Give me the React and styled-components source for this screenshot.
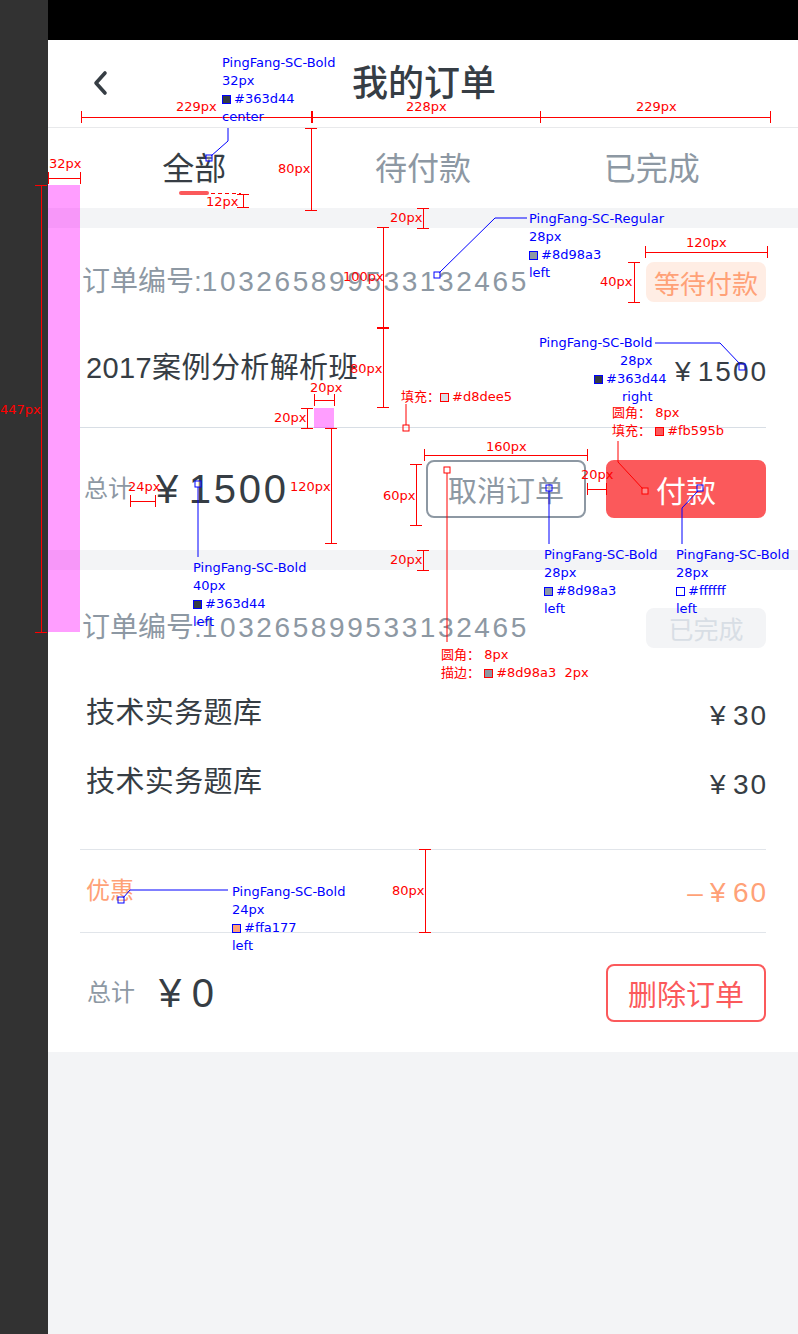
import React from 'react';
import styled, { createGlobalStyle } from 'styled-components';

const TEXT = '#363d44';
const GRAY = '#8d98a3';
const RED = '#fb595b';
const ORANGE = '#ffa177';
const MARK_RED = '#ff0000';
const MARK_BLUE = '#0000ff';

const GlobalStyle = createGlobalStyle`
  * { box-sizing: border-box; }
  body {
    margin: 0;
    background: #f3f4f6;
    font-family: "Liberation Sans", "Noto Sans CJK SC", sans-serif;
  }
`;

const orders = [
  {
    id: 1,
    no: '103265899533132465',
    status: { text: '等待付款', bg: '#ffede4', color: ORANGE },
    items: [{ name: '2017案例分析解析班', price: '1500' }],
    headPad: 8,
    rowHeight: 80,
    listPad: '0 0 19px',
    total: '1500',
    discount: null,
    actions: ['cancel', 'pay'],
  },
  {
    id: 2,
    no: '103265899533132465',
    status: { text: '已完成', bg: '#f3f4f6', color: '#d8dee5' },
    items: [
      { name: '技术实务题库', price: '30' },
      { name: '技术实务题库', price: '30' },
    ],
    headPad: 16,
    rowHeight: 69,
    listPad: '8px 0 33px',
    total: '0',
    discount: '60',
    actions: ['delete'],
  },
];

// dimension marks of the spec sheet (page coordinates)
const hDims = [
  { x1: 81, x2: 770, y: 117, ticks: [81, 311, 540, 770] },
  { x1: 48, x2: 80, y: 178 },
  { x1: 645, x2: 767, y: 252 },
  { x1: 314, x2: 334, y: 400 },
  { x1: 130, x2: 155, y: 501 },
  { x1: 424, x2: 587, y: 455 },
  { x1: 587, x2: 606, y: 489 },
];

const vDims = [
  { x: 311, y1: 128, y2: 210 },
  { x: 243, y1: 194, y2: 207 },
  { x: 41, y1: 185, y2: 632 },
  { x: 423, y1: 208, y2: 228 },
  { x: 383, y1: 227, y2: 407, ticks: [227, 327, 407] },
  { x: 634, y1: 262, y2: 302 },
  { x: 307, y1: 408, y2: 428 },
  { x: 331, y1: 428, y2: 543 },
  { x: 416, y1: 464, y2: 525 },
  { x: 423, y1: 550, y2: 570 },
  { x: 425, y1: 849, y2: 932 },
];

const leaders = [
  { c: MARK_RED, pts: [[406, 404], [406, 425]], sq: [406, 428] },
  { c: MARK_RED, pts: [[618, 441], [618, 462], [643, 489]], sq: [645, 491] },
  { c: MARK_RED, pts: [[447, 473], [447, 642]], sq: [447, 470] },
  { c: MARK_BLUE, pts: [[228, 128], [228, 141], [211, 156]], sq: [209, 158] },
  { c: MARK_BLUE, pts: [[527, 218], [495, 218], [439, 273]], sq: [437, 275] },
  { c: MARK_BLUE, pts: [[655, 343], [720, 343], [740, 364]], sq: [742, 367] },
  { c: MARK_BLUE, pts: [[198, 487], [198, 557]], sq: [198, 484] },
  { c: MARK_BLUE, pts: [[549, 491], [549, 544]], sq: [549, 488] },
  { c: MARK_BLUE, pts: [[682, 544], [682, 508], [698, 491]], sq: [700, 488] },
  { c: MARK_BLUE, pts: [[228, 890], [130, 890], [123, 898]], sq: [121, 900] },
];

const sizeLabels = [
  { x: 176, y: 99, t: '229px' },
  { x: 406, y: 99, t: '228px' },
  { x: 636, y: 99, t: '229px' },
  { x: 278, y: 161, t: '80px' },
  { x: 206, y: 194, t: '12px' },
  { x: 49, y: 156, t: '32px' },
  { x: 0, y: 402, t: '447px' },
  { x: 390, y: 210, t: '20px' },
  { x: 343, y: 269, t: '100px' },
  { x: 350, y: 361, t: '80px' },
  { x: 686, y: 235, t: '120px' },
  { x: 600, y: 274, t: '40px' },
  { x: 310, y: 380, t: '20px' },
  { x: 274, y: 410, t: '20px' },
  { x: 290, y: 479, t: '120px' },
  { x: 128, y: 479, t: '24px' },
  { x: 486, y: 439, t: '160px' },
  { x: 383, y: 488, t: '60px' },
  { x: 581, y: 467, t: '20px' },
  { x: 390, y: 552, t: '20px' },
  { x: 392, y: 883, t: '80px' },
];

const fontNotes = [
  { x: 222, y: 54, lines: ['PingFang-SC-Bold', '32px', ['#363d44', '#363d44'], 'center'] },
  { x: 529, y: 210, lines: ['PingFang-SC-Regular', '28px', ['#8d98a3', '#8d98a3'], 'left'] },
  { x: 193, y: 559, lines: ['PingFang-SC-Bold', '40px', ['#363d44', '#363d44'], 'left'] },
  { x: 544, y: 546, lines: ['PingFang-SC-Bold', '28px', ['#8d98a3', '#8d98a3'], 'left'] },
  { x: 676, y: 546, lines: ['PingFang-SC-Bold', '28px', ['#ffffff', '#ffffff'], 'left'] },
  { x: 232, y: 883, lines: ['PingFang-SC-Bold', '24px', ['#ffa177', '#ffa177'], 'left'] },
];

const Page = styled.div`
  position: relative;
  display: flex;
  width: 798px;
  min-height: 1334px;
  overflow: hidden;
`;

const Sidebar = styled.div`
  width: 48px;
  flex-shrink: 0;
  background: #323232;
`;

const Screen = styled.div`
  flex: 1;
  display: flex;
  flex-direction: column;
  background: #f3f4f6;
`;

const StatusBar = styled.div`
  height: 40px;
  background: #000;
`;

const NavBar = styled.div`
  height: 88px;
  display: grid;
  grid-template-columns: 1fr auto 1fr;
  align-items: center;
  background: #fff;
  border-bottom: 1px solid #e8e9eb;
`;

const BackButton = styled.div`
  justify-self: start;
  display: flex;
  margin-left: 44px;
  margin-top: -2px;
`;

const Title = styled.div`
  font-size: 36px;
  line-height: 44px;
  font-weight: 500;
  color: ${TEXT};
  margin-left: 2px;
`;

const Tabs = styled.div`
  height: 80px;
  display: grid;
  grid-template-columns: repeat(3, 1fr);
  padding: 0 32px;
  background: #fff;
`;

const Tab = styled.div`
  display: flex;
  flex-direction: column;
  align-items: center;
  padding-top: 21px;
  color: ${({ $active }) => ($active ? TEXT : GRAY)};
`;

const TabText = styled.span`
  font-size: 32px;
  line-height: 40px;
`;

const TabBar = styled.span`
  width: 30px;
  height: 4px;
  margin-top: 2px;
  border-radius: 2px;
  background: ${({ $active }) => ($active ? RED : 'transparent')};
`;

const Card = styled.div`
  margin-top: 20px;
  padding: 0 32px;
  background: #fff;
`;

const OrderHead = styled.div`
  height: 100px;
  display: flex;
  align-items: center;
  justify-content: space-between;
  padding-top: ${({ $pt }) => $pt}px;
`;

const OrderNo = styled.span`
  font-size: 28px;
  line-height: 40px;
  color: ${GRAY};
  white-space: nowrap;
  margin-left: 2px;
`;

const Digits = styled.span`
  letter-spacing: 2.6px;
`;

const Badge = styled.span`
  width: 120px;
  height: 40px;
  display: flex;
  align-items: center;
  justify-content: center;
  border-radius: 8px;
  font-size: ${({ $size }) => $size}px;
  background: ${({ $bg }) => $bg};
  color: ${({ $color }) => $color};
`;

const ItemList = styled.div`
  padding: ${({ $pad }) => $pad};
`;

const Row = styled.div`
  height: ${({ $h }) => $h}px;
  display: flex;
  align-items: center;
  justify-content: space-between;
`;

const ItemName = styled.span`
  font-size: 29px;
  line-height: 40px;
  letter-spacing: 0.4px;
  color: ${TEXT};
  margin-left: 6px;
`;

const Price = styled.span`
  font-size: ${({ $size }) => $size}px;
  line-height: 1.2;
  letter-spacing: 0.07em;
  margin-right: -0.07em;
  margin-top: ${({ $mt }) => $mt || 0}px;
  color: ${({ $color }) => $color || TEXT};
  white-space: nowrap;
`;

const Yen = styled.span`
  letter-spacing: 0.26em;
`;

const Divider = styled.div`
  height: 1px;
  background: ${({ $color }) => $color};
`;

const Footer = styled.div`
  height: ${({ $h }) => $h}px;
  display: flex;
  align-items: center;
  justify-content: space-between;
`;

const Total = styled.div`
  display: flex;
  align-items: center;
  gap: 24px;
`;

const SmallLabel = styled.span`
  font-size: 24px;
  line-height: 32px;
  color: ${({ $color }) => $color};
  margin-left: ${({ $ml }) => $ml || 4}px;
`;

const Actions = styled.div`
  display: flex;
  gap: 20px;
`;

const Button = styled.button`
  width: 160px;
  height: 58px;
  border-radius: 8px;
  font-family: "Liberation Sans", "Noto Sans CJK SC", sans-serif;
  padding: 0;
  border: 2px solid ${({ $variant }) => ($variant === 'cancel' ? GRAY : RED)};
  background: ${({ $variant }) => ($variant === 'pay' ? RED : '#fff')};
  color: ${({ $variant }) => ($variant === 'cancel' ? GRAY : $variant === 'pay' ? '#fff' : RED)};
  font-size: ${({ $variant }) => ($variant === 'pay' ? 30 : 29)}px;
`;

/* ---------- spec-sheet overlay ---------- */

const Overlay = styled.div`
  position: absolute;
  inset: 0;
  pointer-events: none;
`;

const Mask = styled.div`
  position: absolute;
  left: ${({ $x }) => $x}px;
  top: ${({ $y }) => $y}px;
  width: ${({ $w }) => $w}px;
  height: ${({ $h }) => $h}px;
  background: rgba(255, 0, 255, 0.38);
`;

const MarkSvg = styled.svg`
  position: absolute;
  left: 0;
  top: 0;
`;

const Label = styled.span`
  position: absolute;
  left: ${({ $x }) => $x}px;
  top: ${({ $y }) => $y}px;
  font-family: "DejaVu Sans", "Noto Sans CJK SC", sans-serif;
  font-size: 13px;
  line-height: 16px;
  color: ${MARK_RED};
  white-space: nowrap;
`;

const Note = styled.div`
  position: absolute;
  left: ${({ $x }) => $x}px;
  top: ${({ $y }) => $y}px;
  font-family: "DejaVu Sans", sans-serif;
  font-size: 13px;
  line-height: 18px;
  color: ${MARK_BLUE};
  white-space: nowrap;
`;

const Swatch = styled.span`
  display: inline-block;
  width: 9px;
  height: 9px;
  margin-right: 3px;
  vertical-align: -1px;
  border: 1px solid ${({ $border }) => $border};
  background: ${({ $fill }) => $fill};
`;

const BackIcon = () => (
  <svg width="18" height="26" viewBox="0 0 18 26">
    <polyline points="13,3 4,13 13,23" fill="none" stroke={TEXT} strokeWidth="3.6" strokeLinecap="round" strokeLinejoin="round" />
  </svg>
);

const Marks = () => {
  const t = 6;
  const els = [];
  hDims.forEach((d, i) => {
    const y = d.y + 0.5;
    els.push(<line key={`h${i}`} x1={d.x1} y1={y} x2={d.x2} y2={y} />);
    (d.ticks || [d.x1, d.x2]).forEach((x, j) => (
      els.push(<line key={`h${i}-${j}`} x1={x + 0.5} y1={d.y - t} x2={x + 0.5} y2={d.y + t} />)
    ));
  });
  vDims.forEach((d, i) => {
    const x = d.x + 0.5;
    els.push(<line key={`v${i}`} x1={x} y1={d.y1} x2={x} y2={d.y2} />);
    (d.ticks || [d.y1, d.y2]).forEach((y, j) => (
      els.push(<line key={`v${i}-${j}`} x1={d.x - t} y1={y + 0.5} x2={d.x + t} y2={y + 0.5} />)
    ));
  });
  return (
    <MarkSvg width="798" height="1334" viewBox="0 0 798 1334">
      <g stroke={MARK_RED} strokeWidth="1" shapeRendering="crispEdges">
        {els}
        <line x1="311.5" y1="111" x2="311.5" y2="123" strokeWidth="2" />
        <line x1="377" y1="327.5" x2="389" y2="327.5" strokeWidth="2" />
        <line x1="211" y1="193.5" x2="241" y2="193.5" strokeDasharray="4 3" />
      </g>
      {leaders.map((l, i) => (
        <g key={i} stroke={l.c} fill="none" strokeWidth="1">
          <polyline points={l.pts.map((p) => p.join(',')).join(' ')} />
          <rect x={l.sq[0] - 3} y={l.sq[1] - 3} width="6" height="6" fill="#fff" fillOpacity="0.3" />
        </g>
      ))}
    </MarkSvg>
  );
};

const Annotations = () => (
  <Overlay>
    <Mask $x={48} $y={185} $w={32} $h={447} />
    <Mask $x={314} $y={408} $w={20} $h={20} />
    <Marks />
    {sizeLabels.map((l, i) => (
      <Label key={i} $x={l.x} $y={l.y}>{l.t}</Label>
    ))}
    <Label $x={401} $y={389}>填充：<Swatch $border={MARK_RED} $fill="#d8dee5" />#d8dee5</Label>
    <Label $x={612} $y={405}>圆角： 8px</Label>
    <Label $x={612} $y={423}>填充： <Swatch $border={MARK_RED} $fill={RED} />#fb595b</Label>
    <Label $x={441} $y={647}>圆角： 8px</Label>
    <Label $x={441} $y={665}>描边： <Swatch $border={MARK_RED} $fill={GRAY} />#8d98a3&nbsp; 2px</Label>
    {fontNotes.map((n, i) => (
      <Note key={i} $x={n.x} $y={n.y}>
        {n.lines.map((line, j) => (
          <div key={j}>
            {Array.isArray(line) ? (
              <>
                <Swatch $border={MARK_BLUE} $fill={line[0]} />
                {line[1]}
              </>
            ) : line}
          </div>
        ))}
      </Note>
    ))}
    <Note $x={539} $y={334}>PingFang-SC-Bold</Note>
    <Note $x={620} $y={352}>28px</Note>
    <Note $x={594} $y={370}><Swatch $border={MARK_BLUE} $fill={TEXT} />#363d44</Note>
    <Note $x={622} $y={388}>right</Note>
  </Overlay>
);

const PriceText = ({ value, size, color, sign, mt }) => (
  <Price $size={size} $color={color} $mt={mt}>
    {sign && <Yen>–</Yen>}
    <Yen>¥</Yen>
    {value}
  </Price>
);

const actionLabels = { cancel: '取消订单', pay: '付款', delete: '删除订单' };

const OrderCard = ({ order }) => (
  <Card>
    <OrderHead $pt={order.headPad}>
      <OrderNo>订单编号:<Digits>{order.no}</Digits></OrderNo>
      <Badge $bg={order.status.bg} $color={order.status.color} $size={order.status.text.length > 3 ? 26 : 25}>
        {order.status.text}
      </Badge>
    </OrderHead>
    <ItemList $pad={order.listPad}>
      {order.items.map((item, i) => (
        <Row key={i} $h={order.rowHeight}>
          <ItemName>{item.name}</ItemName>
          <PriceText value={item.price} size={28} mt={7} />
        </Row>
      ))}
    </ItemList>
    {order.discount ? (
      <>
        <Divider $color="#e1e5ea" />
        <Row $h={82}>
          <SmallLabel $color={ORANGE} $ml={6}>优惠</SmallLabel>
          <PriceText value={order.discount} size={28} color={ORANGE} sign mt={4} />
        </Row>
        <Divider $color="#e1e5ea" />
      </>
    ) : (
      <Divider $color="#d8dee5" />
    )}
    <Footer $h={order.discount ? 119 : 122}>
      <Total>
        <SmallLabel $color={GRAY} $ml={order.discount ? 7 : 4}>总计</SmallLabel>
        <PriceText value={order.total} size={40} />
      </Total>
      <Actions>
        {order.actions.map((a) => (
          <Button key={a} $variant={a}>{actionLabels[a]}</Button>
        ))}
      </Actions>
    </Footer>
  </Card>
);

const tabs = ['全部', '待付款', '已完成'];

export default function App() {
  return (
    <>
      <GlobalStyle />
      <Page>
        <Sidebar />
        <Screen>
          <StatusBar />
          <NavBar>
            <BackButton><BackIcon /></BackButton>
            <Title>我的订单</Title>
            <span />
          </NavBar>
          <Tabs>
            {tabs.map((t, i) => (
              <Tab key={t} $active={i === 0}>
                <TabText>{t}</TabText>
                <TabBar $active={i === 0} />
              </Tab>
            ))}
          </Tabs>
          {orders.map((o) => (
            <OrderCard key={o.id} order={o} />
          ))}
        </Screen>
        <Annotations />
      </Page>
    </>
  );
}
